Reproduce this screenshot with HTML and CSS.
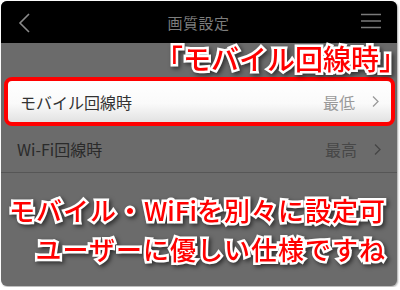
FILE: index.html
```html
<!DOCTYPE html>
<html lang="ja">
<head>
<meta charset="utf-8">
<link rel="stylesheet" href="styles.css">
</head>
<body>
<div class="frame">
  <header class="header">
    <svg class="back" width="12" height="20" viewBox="0 0 12 20"><path d="M11 1 L2 10 L11 19" fill="none" stroke="#8a8a8a" stroke-width="1.6"/></svg>
    <div class="title">画質設定</div>
    <svg class="menu" width="20" height="16" viewBox="0 0 20 16"><path d="M0 1.5H20M0 8H20M0 14.5H20" stroke="#7a7a7a" stroke-width="1.6"/></svg>
  </header>
  <div class="annot"><span class="outline"><span class="br">「</span>モバイル回線時<span class="br">」</span></span></div>
  <div class="row hl">
    <span class="label">モバイル回線時</span>
    <span class="value">最低</span>
    <svg class="chev" width="7" height="11" viewBox="0 0 7 11"><path d="M1 0.5 L6 5.5 L1 10.5" fill="none" stroke="#9a9a9a" stroke-width="1.3"/></svg>
  </div>
  <div class="row dim">
    <span class="label">Wi-Fi回線時</span>
    <span class="value">最高</span>
    <svg class="chev" width="7" height="11" viewBox="0 0 7 11"><path d="M1 0.5 L6 5.5 L1 10.5" fill="none" stroke="#454545" stroke-width="1.3"/></svg>
  </div>
  <div class="captions">
    <div class="cap"><span class="outline">モバイル・<span class="latin">WiFi</span>を別々に設定可</span></div>
    <div class="cap"><span class="outline">ユーザーに優しい仕様ですね</span></div>
  </div>
</div>
</body>
</html>
```

FILE: styles.css
```css
* { box-sizing: border-box; }
html, body { margin: 0; padding: 0; background: #fff; }
body { font-family: "Noto Sans CJK JP", "Noto Sans", sans-serif; }
.frame {
  margin: 1px;
  width: 396px;
  height: 285px;
  border-radius: 6px;
  background: #6b6b6b;
  overflow: hidden;
  box-shadow: 1px 1px 2px rgba(0,0,0,0.35);
  display: flex;
  flex-direction: column;
}
.frame > * { flex: none; }
.header {
  height: 42px;
  background: #000;
  display: flex;
  align-items: center;
  justify-content: space-between;
  padding: 0 16px 0 17px;
}
.back { margin-top: 1px; }
.title { color: #7d7d7d; font-size: 15px; letter-spacing: 0.5px; margin-left: 6px; }
.menu { margin-top: -2px; }
.outline {
  color: #ff0000;
  font-weight: 500;
  -webkit-text-stroke: 5px #fff;
  paint-order: stroke fill;
  filter: drop-shadow(2px 2px 2px rgba(0,0,0,0.55));
}
.annot {
  height: 34px;
  text-align: right;
  padding-right: 4px;
  font-size: 28px;
  line-height: 30px;
  white-space: nowrap;
}
.br { font-feature-settings: "halt" 1; }
.row {
  display: flex;
  align-items: center;
  font-size: 16px;
}
.row .label { flex: 1; }
.row .value { margin-right: 17px; }
.hl {
  height: 49px;
  margin: 0 2px 0 3px;
  border: 4px solid #ff0000;
  border-radius: 8px;
  background: linear-gradient(#fff 0%, #fafafa 55%, #e2e2e2 100%);
  padding: 0 12px 0 12px;
}
.hl .label { color: #333; }
.hl .value { color: #9a9a9a; }
.dim {
  height: 47px;
  border-bottom: 1px solid #565656;
  padding: 0 16px 0 16px;
}
.dim .label { color: #2a2a2a; }
.dim .value { color: #474747; }
.captions {
  padding: 17px 11px 0 0;
  text-align: right;
  font-size: 26px;
  line-height: 39px;
  letter-spacing: 1px;
  white-space: nowrap;
}
.latin { letter-spacing: 0; }
```
